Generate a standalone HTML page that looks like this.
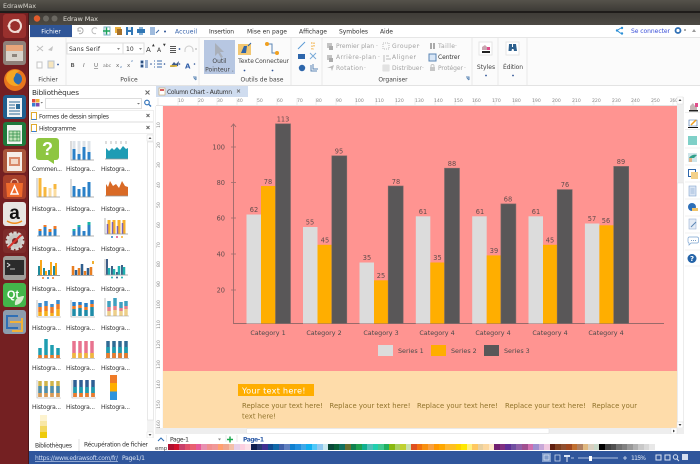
<!DOCTYPE html>
<html><head><meta charset="utf-8"><title>Edraw Max</title>
<style>
html,body{margin:0;padding:0;width:700px;height:464px;overflow:hidden;background:#fff}
svg{position:absolute;left:0;top:0}
text{font-family:"DejaVu Sans","Liberation Sans",sans-serif;font-size:6px;fill:#333}
.l{font-family:"Liberation Sans",sans-serif}
.h{font-size:6px;fill:#333}
.r{font-size:4.6px;fill:#888}
.g{fill:#a2a2a2}
.c{font-size:6.4px;fill:#4a4a4a;text-anchor:middle}
.v{font-size:6.6px;fill:#624c4c;text-anchor:middle}
.t{font-size:6.8px;fill:#90722a}
.pal{position:absolute;left:168px;top:444px;display:flex;height:6px}
.pal i{display:block;width:5.534px;height:6px}
</style></head><body>
<svg width="700" height="464" viewBox="0 0 700 464" xmlns="http://www.w3.org/2000/svg">
<defs>
<linearGradient id="tb" x1="0" y1="0" x2="0" y2="1"><stop offset="0" stop-color="#55524b"/><stop offset="1" stop-color="#3d3b36"/></linearGradient>
<linearGradient id="tb2" x1="0" y1="0" x2="0" y2="1"><stop offset="0" stop-color="#3f3c37"/><stop offset="1" stop-color="#4d4a44"/></linearGradient>
</defs>
<!-- top panels -->
<rect width="700" height="11" fill="url(#tb)"/>
<text x="3" y="8" style="font-size:6.4px;fill:#d8d5ce">EdrawMax</text>
<rect y="11" width="700" height="2" fill="#1f1c1a"/>
<rect y="13" width="700" height="12" fill="url(#tb2)"/>
<!-- launcher -->
<rect y="13" width="29" height="451" fill="#742022"/>
<rect x="28" y="13" width="1" height="451" fill="#4a1517"/>
<!-- launcher icons -->
<rect x="3" y="14" width="23" height="24" rx="3" fill="#99302d"/>
<circle cx="15" cy="26" r="6" fill="none" stroke="#f1dcd6" stroke-width="2"/>
<circle cx="9" cy="26" r="1.5" fill="#f1dcd6"/><circle cx="18" cy="20.5" r="1.5" fill="#f1dcd6"/><circle cx="18" cy="31.5" r="1.5" fill="#f1dcd6"/>
<rect x="3" y="41" width="23" height="24" rx="3" fill="#8f8179"/>
<rect x="6" y="45" width="17" height="16" fill="#d9d4cc"/><rect x="6" y="45" width="17" height="6" fill="#e8a67a"/><rect x="12" y="54" width="5" height="3" fill="#8d857d"/>
<circle cx="15" cy="80" r="11" fill="#e8761d"/><circle cx="16" cy="79" r="6" fill="#2c6cb0"/><path d="M7 74c3-4 8-5 13-3-3 1-5 3-5 5-3 3-1 8 5 9-6 3-13-1-14-7z" fill="#f5a623"/>
<rect x="3" y="95" width="23" height="24" rx="3" fill="#205f8e"/><rect x="7" y="98" width="15" height="19" fill="#f2f4f6"/><path d="M9 102h11M9 105h6M9 108h6M9 111h11M9 114h11" stroke="#2a6a98"/><rect x="16" y="104" width="4" height="5" fill="#2a6a98"/>
<rect x="3" y="122" width="23" height="24" rx="3" fill="#1f7a3c"/><rect x="7" y="125" width="15" height="19" fill="#f3f6f2"/><path d="M9 131h11v10H9zM9 134h11M9 137h11M13 131v10M17 131v10" fill="#bfe3b8" stroke="#2c8a45" stroke-width=".7"/>
<rect x="3" y="149" width="23" height="24" rx="3" fill="#a9563b"/><rect x="7" y="152" width="15" height="19" fill="#f6eee8"/><rect x="9" y="157" width="11" height="9" fill="#d98a6a"/><rect x="11" y="159" width="7" height="5" fill="#f3d9c8"/>
<rect x="3" y="175" width="23" height="24" rx="3" fill="#a8402a"/><path d="M6 183h17l-1 14H7z" fill="#ee6a2c"/><path d="M11 183c0-5 7-5 7 0" fill="none" stroke="#f9c7a5"/><path d="M14.500 186l-3.500 8h7z" fill="none" stroke="#fff" stroke-width="1.500"/>
<rect x="3" y="202" width="23" height="24" rx="3" fill="#e8e6e3"/><text x="14.500" y="219" class="l" style="font-size:19px;font-weight:bold;fill:#111;text-anchor:middle">a</text><path d="M7 221c5 3 10 3 15 0" fill="none" stroke="#f08c1a" stroke-width="1.500"/>
<rect x="3" y="229" width="23" height="24" rx="3" fill="#7d2c2b"/><circle cx="15" cy="241" r="8" fill="#c8c6c2" stroke="#d6d4d0" stroke-width="3" stroke-dasharray="3 1.500"/><circle cx="15" cy="241" r="3" fill="#7d2a28"/><path d="M8 248L21 235" stroke="#d8332c" stroke-width="2"/>
<rect x="3" y="256" width="23" height="24" rx="3" fill="#a09e9a"/><rect x="5" y="260" width="19" height="15" fill="#2b2b2b"/><path d="M7 263l3 2-3 2M10 269h5" stroke="#eee" fill="none" stroke-width=".8"/>
<rect x="3" y="283" width="23" height="24" rx="3" fill="#44b54a"/><text x="13" y="298" class="l" style="font-size:11px;font-weight:bold;fill:#fff;text-anchor:middle">Qt</text><path d="M15 305c-1-6 4-9 9-9-1 5-4 9-9 9z" fill="#d9ecd0"/>
<rect x="3" y="310" width="23" height="24" rx="3" fill="#8c9dae"/><path d="M18 316H7v12h11" fill="none" stroke="#2f6fb5" stroke-width="2"/><path d="M10 322h12v-4M22 322v9H12" fill="none" stroke="#f0b13a" stroke-width="2"/>
<!-- window title -->
<circle cx="37" cy="18.500" r="3.200" fill="#e25c2c"/><circle cx="46" cy="18.500" r="3" fill="#6b6862"/><circle cx="54.500" cy="18.500" r="3" fill="#6b6862"/>
<text x="63" y="21" style="font-size:6.5px;fill:#e2dfd8" textLength="35">Edraw Max</text>
<!-- tab row -->
<rect x="29" y="25" width="671" height="12" fill="#fff"/>
<rect x="30" y="25" width="42" height="12" fill="#2f5597"/>
<text x="51" y="33.500" style="font-size:6px;fill:#fff;text-anchor:middle">Fichier</text>
<!-- qat -->
<path d="M78 28.500a3 3 0 1 1 1 5M78 28v3h3" fill="none" stroke="#aaa"/><path d="M97 28.500a3 3 0 1 0-1 5" fill="none" stroke="#bbb"/>
<rect x="104" y="27" width="6" height="8" fill="#fff" stroke="#7fb0c9"/><path d="M103 31h7M106.500 27.500v7" stroke="#1ba35a" stroke-width="1.500"/>
<rect x="115" y="27" width="6" height="6" fill="#eab140"/><rect x="117" y="29" width="5" height="6" fill="#a5702a"/>
<rect x="126" y="27" width="7" height="8" fill="#3177b5"/><rect x="128" y="27" width="3" height="3" fill="#d8e6f2"/><rect x="128" y="32" width="3" height="3" fill="#fff"/>
<rect x="137" y="29" width="8" height="4" fill="#3177b5"/><rect x="139" y="27" width="4" height="2" fill="#88b2d6"/><rect x="139" y="33" width="4" height="2" fill="#88b2d6"/>
<rect x="150" y="27" width="5" height="8" fill="#9fbbdd"/><path d="M156 33l3-3" stroke="#3b6aa8"/>
<circle cx="165" cy="31.500" r="1" fill="#2f5597"/>
<rect x="168" y="25" width="33" height="12" fill="#fff"/>
<text x="175" y="33.500" style="font-size:6px;fill:#2f5da8" textLength="22">Accueil</text>
<text x="209" y="33.500" class="h" textLength="25">Insertion</text>
<text x="247" y="33.500" class="h" textLength="40">Mise en page</text>
<text x="299" y="33.500" class="h" textLength="28">Affichage</text>
<text x="339" y="33.500" class="h" textLength="29">Symboles</text>
<text x="380" y="33.500" class="h" textLength="13">Aide</text>
<path d="M621 28l-4 2.500 4 3" fill="none" stroke="#2c8fd6"/><circle cx="617" cy="30.500" r="1.200" fill="#2c8fd6"/><circle cx="622" cy="28" r="1.200" fill="#2c8fd6"/><circle cx="622" cy="33.500" r="1.200" fill="#2c8fd6"/>
<text x="631" y="33" style="font-size:6px;fill:#3a4fd8" textLength="39">Se connecter</text>
<circle cx="678" cy="30.500" r="2.500" fill="none" stroke="#2f6fb5" stroke-width="1.800"/>
<path d="M684 30h2" stroke="#555"/><path d="M692 32l2-3 2 3z" fill="#999"/>
<!-- ribbon -->
<rect x="29" y="37" width="671" height="49" fill="#fbfbfb"/>
<rect x="29" y="85" width="671" height="1" fill="#e3e3e3"/>
<path d="M66 38v47M199 38v47M291 38v47M322 38v47M472 38v47M498 38v47M527 38v47" stroke="#e8e8e8"/>
<path d="M29.500 37.500H700" stroke="#e6e6e6"/>
<!-- fichier group -->
<path d="M37 46l6 5M43 46l-6 5" stroke="#c0c0c0" fill="none"/><path d="M48 50l5-4-1 5z" fill="#c4c4c4"/>
<rect x="37" y="62" width="5" height="6" fill="#fff" stroke="#c4c4c4"/><rect x="48" y="61" width="6" height="7" fill="#f6e6bf" stroke="#b9c3d1"/><circle cx="58" cy="64.500" r=".9" fill="#2f5597"/>
<text x="48" y="81.500" style="text-anchor:middle;font-size:6px;fill:#444">Fichier</text>
<!-- police group -->
<rect x="67" y="43" width="56" height="11" fill="#fff" stroke="#ddd"/>
<text x="69" y="51" class="h" textLength="31">Sans Serif</text><path d="M117 48h3l-1.500 2z" fill="#888"/>
<rect x="123" y="43" width="21" height="11" fill="#fff" stroke="#ddd"/>
<text x="126" y="51" class="h">10</text><path d="M139 48h3l-1.500 2z" fill="#888"/>
<text x="146" y="52" class="h" style="font-size:7px">A</text><text x="152" y="46" style="font-size:3.500px">▲</text>
<text x="157" y="52" class="h" style="font-size:6px">A</text><text x="163" y="46" style="font-size:3.500px">▼</text>
<path d="M170 46.500h6M170 48.500h6M170 50.500h6M170 52.500h6" stroke="#555"/><circle cx="179.500" cy="49" r=".9" fill="#2f5597"/>
<path d="M185 52v-2a4 4 0 0 1 8 0v2" fill="none" stroke="#ccc"/><path d="M195 49h2" stroke="#aaa"/>
<g style="font-size:6px">
<text x="70.500" y="67" style="font-weight:bold;font-size:5.500px;fill:#666">B</text>
<text x="83" y="67" style="font-style:italic;font-size:5.500px;fill:#666">I</text>
<text x="94" y="67" style="text-decoration:underline;font-size:5.500px;fill:#666">U</text>
<text x="103" y="67" style="font-size:4.500px;fill:#777">abc</text>
<text x="116" y="67" style="font-size:5.500px;fill:#666">x</text><text x="120" y="68" style="font-size:3px;fill:#36a">2</text>
<text x="127" y="67" style="font-size:5.500px;fill:#666">x</text><text x="131" y="62" style="font-size:3px;fill:#36a">2</text>
</g>
<path d="M141 61h2v2h-2zM141 65h2v2h-2zM145 61h3M145 63h3M145 65h3M145 67h3" stroke="#3b6aa8" stroke-width=".9"/>
<circle cx="151" cy="64" r=".8" fill="#2f5597"/>
<path d="M154 61h1M154 64h1M154 67h1M157 61h5M157 64h5M157 67h5" stroke="#3b6aa8"/><circle cx="164.500" cy="64" r=".8" fill="#2f5597"/>
<path d="M170 67l4-5 2 2 3-3-1 5-4 1z" fill="#3c5a8a"/><path d="M170 66h7" stroke="#f3c22d" stroke-width="1.500"/><circle cx="179.500" cy="64" r=".8" fill="#2f5597"/>
<text x="185" y="68.500" style="font-size:7px;fill:#2f5da8;font-weight:bold">A</text><circle cx="194.500" cy="64" r=".8" fill="#2f5597"/>
<text x="129" y="81.500" style="text-anchor:middle;font-size:6px;fill:#444">Police</text>
<path d="M193 77h3v3M196 80l-2-2" stroke="#5b86b4" fill="none"/>
<!-- outils -->
<rect x="204" y="40" width="31" height="34" fill="#b7c7e2"/>
<path d="M215 43v13l3-3 3 5 2-1-3-5h4z" fill="#a9afb9"/>
<text x="219.500" y="63" style="text-anchor:middle;font-size:6px;fill:#444">Outil</text>
<text x="219.500" y="71.500" style="text-anchor:middle;font-size:6px;fill:#444">Pointeur .</text>
<rect x="238" y="44" width="13" height="11" fill="#f2c772"/><path d="M241 53l3-7h3l-1 7z" fill="#2e63a8"/><path d="M248 46l3-3" stroke="#2e63a8"/>
<text x="246" y="63" style="text-anchor:middle;font-size:6px;fill:#444">Texte</text>
<circle cx="244.500" cy="70.500" r=".9" fill="#2f5597"/>
<path d="M267 44h5v9h5" fill="none" stroke="#5b86b4"/><circle cx="267" cy="44" r="2" fill="#f0a020"/><circle cx="277" cy="53" r="2" fill="#f0a020"/>
<text x="272" y="63" style="text-anchor:middle;font-size:6px;fill:#444" textLength="34">Connecteur</text>
<circle cx="272.500" cy="70.500" r=".9" fill="#2f5597"/>
<text x="262" y="81.500" style="text-anchor:middle;font-size:6px;fill:#444">Outils de base</text>
<path d="M298 49l7-7" stroke="#5b9bd5"/><path d="M311 43h3v3h-2v3h2" fill="none" stroke="#f0a020" stroke-dasharray="1.500 1"/>
<rect x="298" y="54" width="7" height="5" fill="#2e66ab"/><path d="M310 53l6 6M316 53l-6 6" stroke="#7aaad8"/><circle cx="302" cy="68" r="3.200" fill="#2e66ab"/><path d="M311 65v6h6M313 64v5h5" fill="none" stroke="#5b86b4"/>
<!-- organiser -->
<g class="gg">
<rect x="327" y="43" width="5" height="5" fill="#c4c4c4"/><rect x="329" y="46" width="4" height="4" fill="#aaa"/>
<text x="336" y="48" class="g" textLength="38">Premier plan</text><text x="376" y="48" class="g">·</text>
<rect x="327" y="55" width="5" height="5" fill="#c4c4c4"/><rect x="329" y="58" width="4" height="4" fill="#aaa"/>
<text x="336" y="59" class="g" textLength="40">Arrière-plan</text><text x="378" y="59" class="g">·</text>
<path d="M327 68l7-3-2 6-1-3z" fill="#bbb"/>
<text x="336" y="70" class="g" textLength="27">Rotation</text><text x="364" y="70" class="g">·</text>
<path d="M383 43h6v6h-6z" fill="none" stroke="#bbb" stroke-dasharray="1 1"/>
<text x="392" y="48" class="g" textLength="27">Grouper</text><text x="418" y="48" class="g">·</text>
<path d="M384 55v7M386 56h3M386 59h5" stroke="#bbb"/>
<text x="392" y="59" class="g" textLength="24">Aligner</text><text x="414" y="59" class="g">·</text>
<path d="M383 65h6v6h-6zM385 65v6M387 65v6M383 67h6M383 69h6" fill="none" stroke="#c6c6c6" stroke-width=".6"/>
<text x="392" y="70" class="g" textLength="30">Distribuer</text><text x="422" y="70" class="g">·</text>
<path d="M431 43v6M434 43v6" stroke="#aaa" stroke-width="2"/>
<text x="438" y="48" class="g" textLength="17">Taille</text><text x="455" y="48" class="g">·</text>
<rect x="429" y="54" width="7" height="7" fill="#d8e6f6" stroke="#5b86b4"/>
<text x="438" y="59" style="font-size:6px;fill:#333" textLength="22">Centrer</text>
<rect x="430" y="67" width="5" height="4" fill="#c6c6c6"/><path d="M431 67v-1a1.500 1.500 0 0 1 3 0v1" fill="none" stroke="#c6c6c6"/>
<text x="438" y="70" class="g" textLength="25">Protéger</text><text x="464" y="70" class="g">·</text>
</g>
<text x="393" y="81.500" style="text-anchor:middle;font-size:6px;fill:#444">Organiser</text>
<path d="M466 77h3v3M469 80l-2-2" stroke="#5b86b4" fill="none"/>
<!-- styles, edition -->
<rect x="479" y="42" width="13" height="13" fill="#fff" stroke="#e6e6e6"/><rect x="482" y="51" width="8" height="2" fill="#222"/><path d="M482 50v-3l3-2 2 2 2 1v2z" fill="#c9a5b0"/><path d="M487 47h3v3h-3z" fill="#e14d8a"/>
<text x="486" y="69" style="text-anchor:middle;font-size:6px;fill:#444">Styles</text><circle cx="486" cy="75.500" r=".9" fill="#2f5597"/>
<rect x="506" y="42" width="13" height="13" fill="#fff" stroke="#e6e6e6"/><path d="M509 44h3v3h1v-3h3l1 7h-3l-.5-2h-1.500l-.5 2h-3z" fill="#2c5f8d"/>
<text x="513" y="69" style="text-anchor:middle;font-size:6px;fill:#444" textLength="20">Édition</text><circle cx="513" cy="75.500" r=".9" fill="#2f5597"/>
<!-- sidebar -->
<rect x="29" y="86" width="127" height="365" fill="#fff"/>
<text x="32" y="95" style="font-size:7.300px;fill:#333" textLength="47">Bibliothèques</text>
<path d="M145.500 90.500l4 4M149.500 90.500l-4 4" stroke="#666"/>
<rect x="32" y="99" width="3.500" height="3.500" fill="#e24a3b"/><rect x="36" y="99" width="3.500" height="3.500" fill="#f0b033"/><rect x="32" y="103" width="3.500" height="3.500" fill="#3a7fd0"/><rect x="36" y="103" width="3.500" height="3.500" fill="#7f4bb0"/>
<path d="M40.500 102h2.500l-1.250 1.500z" fill="#777"/>
<rect x="45.500" y="98.500" width="96" height="10" fill="#fff" stroke="#ddd"/><path d="M137 103h3l-1.500 1.500z" fill="#777"/>
<circle cx="147" cy="102.500" r="2.300" fill="none" stroke="#2d6fb8" stroke-width="1.100"/><path d="M149 104.500l2 2" stroke="#2d6fb8" stroke-width="1.300"/>
<rect x="30.500" y="110.500" width="123" height="11" fill="#fff" stroke="#eee"/>
<rect x="31.500" y="112.500" width="5" height="7" fill="#fff" stroke="#e0a92e"/><path d="M31.500 119.500h5" stroke="#3a7fd0"/>
<text x="39" y="118.500" style="font-size:6px;fill:#333" textLength="70">Formes de dessin simples</text>
<path d="M146.500 114l3 3M149.500 114l-3 3" stroke="#666"/>
<rect x="30.500" y="122.500" width="123" height="11" fill="#fff" stroke="#eee"/>
<rect x="31.500" y="124.500" width="5" height="7" fill="#fff" stroke="#e0a92e"/><path d="M31.500 131.500h5" stroke="#3a7fd0"/>
<text x="39" y="130.500" style="font-size:6px;fill:#333" textLength="37">Histogramme</text>
<path d="M146.500 126l3 3M149.500 126l-3 3" stroke="#666"/>
<!-- sidebar scrollbar -->
<rect x="147" y="134" width="7" height="304" fill="#f3f3f3"/>
<rect x="147" y="135" width="6" height="6" fill="#fff" stroke="#ddd" stroke-width=".5"/><path d="M148.500 139h3l-1.500-2z" fill="#555"/>
<rect x="147.500" y="142" width="6" height="278" fill="#fff" stroke="#ddd" stroke-width=".6"/>
<rect x="147" y="432" width="6" height="6" fill="#fff" stroke="#ddd" stroke-width=".5"/><path d="M148.500 434h3l-1.500 2z" fill="#555"/>
<!-- thumbs row 1 -->
<rect x="36" y="138" width="23" height="22" rx="3" fill="#8ec641"/><path d="M48 160h6v4z" fill="#8ec641"/>
<text x="47.500" y="155" class="l" style="font-size:18px;font-weight:bold;fill:#fff;text-anchor:middle">?</text>
<g transform="translate(71,141)"><path d="M3 0v19M8 0v19M13 0v19M18 0v19" stroke="#dde3e8" stroke-width="3"/><path d="M3 19V8M8 19V13M13 19V6M18 19V11" stroke="#2a80c8" stroke-width="3"/><path d="M0 0v19h23" fill="none" stroke="#999" stroke-width=".7"/></g>
<g transform="translate(105,141)"><path d="M1 3V0M6 3V0M11 3V0M16 3V0M21 3V0" stroke="#bbb"/><path d="M1 18V7l3 3 3-3 2 2 3-3 3 3 3-4 3 3 2-1v11z" fill="#1f9cb4"/><path d="M0 18h23" stroke="#999" stroke-width=".7"/></g>
<!-- row 2 -->
<g transform="translate(37,178)"><path d="M3 19V0M8 19V9M13 19V13M18 19V6" stroke="#f7b73d" stroke-width="3"/><path d="M13 19V10M18 19V11" stroke="#fbdca0" stroke-width="3"/><path d="M0 0v19h23" fill="none" stroke="#999" stroke-width=".7"/></g>
<g transform="translate(71,179)"><path d="M3 18V7M8 18V10M13 18V8M18 18V3" stroke="#2a80c8" stroke-width="3"/><path d="M0 0v18h23" fill="none" stroke="#999" stroke-width=".7"/></g>
<g transform="translate(105,178)"><path d="M1 18V6l2 3 2-6 3 5 3-2 3 4 3-7 3 5 3 1v9z" fill="#d96a26"/><path d="M0 18h23" stroke="#999" stroke-width=".7"/></g>
<!-- row 3 -->
<g transform="translate(37,220)"><path d="M3 16v-5M8 16V7M13 16v-4M18 16V9" stroke="#2a80c8" stroke-width="3"/><path d="M3 11V9M8 7V5M13 12v-3M18 9V6" stroke="#ef7b28" stroke-width="3"/><path d="M0 16h23" stroke="#999" stroke-width=".7"/></g>
<g transform="translate(71,220)"><path d="M3 16v-5M8 16V7M13 16v-5M18 16V5" stroke="#2a80c8" stroke-width="3"/><path d="M3 11V9M8 7V5M18 5V2" stroke="#1cb5a5" stroke-width="3"/><path d="M0 16h23" stroke="#999" stroke-width=".7"/></g>
<g transform="translate(105,218)"><path d="M4 16V2M9 16V2M14 16V2M19 16V2" stroke="#f7b02c" stroke-width="3"/><path d="M2.500 16V6M7.500 16V4M12.500 16V8M17.500 16V5" stroke="#7c64b8" stroke-width="1.500"/><path d="M0 0v16h23" fill="none" stroke="#999" stroke-width=".7"/><circle cx="7" cy="19" r="1" fill="#2a80c8"/><circle cx="12" cy="19" r="1" fill="#e14d8a"/><circle cx="17" cy="19" r="1" fill="#f7b02c"/></g>
<!-- row 4 -->
<g transform="translate(37,259)"><path d="M2 16V7M7 16V9M12 16V11M17 16V7" stroke="#1f8a9c" stroke-width="2"/><path d="M4 16V1M9 16V12M14 16V3M19 16V4" stroke="#f9a619" stroke-width="2"/><path d="M0 16.500h23" stroke="#999"/><circle cx="6" cy="19" r="1" fill="#ef7b28"/><circle cx="11" cy="19" r="1" fill="#2a80c8"/><circle cx="16" cy="19" r="1" fill="#ef7b28"/></g>
<g transform="translate(71,261)"><path d="M2 14V5M8 14V7M14 14V10M20 14V6" stroke="#e87f23" stroke-width="2.500"/><path d="M5 14V9M11 14V3M17 14V7" stroke="#2f5f8f" stroke-width="2.500"/><path d="M0 14.500h23" stroke="#999" stroke-width=".7"/><rect x="21" y="0" width="2" height="3" fill="#f0b030"/></g>
<g transform="translate(105,259)"><path d="M2 16V0M7 16V7M12 16V13M17 16V6" stroke="#3f5f88" stroke-width="2"/><path d="M4 16V9M9 16V10M14 16V7M19 16V8" stroke="#1fb0b0" stroke-width="2.500"/><path d="M0 0v16h23" fill="none" stroke="#999" stroke-width=".7"/><circle cx="7" cy="18.500" r="1" fill="#1fb0b0"/><circle cx="12" cy="18.500" r="1" fill="#3f5f88"/><circle cx="17" cy="18.500" r="1" fill="#1fb0b0"/></g>
<!-- row 5 -->
<g transform="translate(37,299)"><path d="M3 17V13M9 17V12M15 17V14M21 17V10" stroke="#f5b01e" stroke-width="3.500"/><path d="M3 13V8M9 12V7M15 14V8M21 10V5" stroke="#ef7b28" stroke-width="3.500"/><path d="M3 8V4M9 7V2M15 8V5M21 5V1" stroke="#2a80c8" stroke-width="3.500" opacity=".9"/><path d="M0 1v17h24" fill="none" stroke="#999" stroke-width=".6"/></g>
<g transform="translate(71,299)"><path d="M3 17V10M9 17V9M15 17V11M21 17V8" stroke="#1f8ca8" stroke-width="3.500"/><path d="M3 10V7M9 9V6M15 11V8M21 8V5" stroke="#ef7b28" stroke-width="3.500"/><path d="M3 7V3M9 6V3M15 8V4M21 5V1" stroke="#2a80c8" stroke-width="3.500"/><path d="M0 1v17h24" fill="none" stroke="#999" stroke-width=".6"/></g>
<g transform="translate(105,297)"><path d="M4 19V14M10 19V13M16 19V14M21 19V12" stroke="#edcf8a" stroke-width="3.500"/><path d="M4 14V10M10 13V9M16 14V11M21 12V9" stroke="#e5808a" stroke-width="3.500"/><path d="M4 10V4M10 9V1M16 11V5M21 9V4" stroke="#3fa0c0" stroke-width="3.500"/><path d="M0 1v18h24" fill="none" stroke="#999" stroke-width=".6"/></g>
<!-- row 6 -->
<g transform="translate(37,338)"><path d="M3 20V10M9 20V1M15 20V7M21 20V10" stroke="#1f9db0" stroke-width="3.500"/><path d="M3 20V17M9 20V17M15 20V17M21 20V17" stroke="#ef7b28" stroke-width="3.500"/><path d="M0 20.500h24" stroke="#999" stroke-width=".6"/></g>
<g transform="translate(71,338)"><path d="M3 20V3M9 20V3M15 20V3M21 20V3" stroke="#e8738f" stroke-width="3.500"/><path d="M3 20V15M9 20V15M15 20V15M21 20V15" stroke="#efb83d" stroke-width="3.500"/><path d="M0 20.500h24" stroke="#999" stroke-width=".6"/></g>
<g transform="translate(105,338)"><path d="M3 20V3M9 20V3M15 20V3M21 20V3" stroke="#2f6a94" stroke-width="3.500"/><path d="M3 20V9M9 20V9M15 20V9M21 20V9" stroke="#1f9db0" stroke-width="3.500"/><path d="M3 20V15M9 20V15M15 20V15M21 20V15" stroke="#ef7b28" stroke-width="3.500"/><path d="M0 20.500h24" stroke="#999" stroke-width=".6"/></g>
<!-- row 7 -->
<g transform="translate(37,379)"><path d="M3 18V2M9 18V2M15 18V2M21 18V2" stroke="#d0b44a" stroke-width="3.500"/><path d="M3 14V7M9 14V7M15 14V7M21 14V7" stroke="#4f8fb0" stroke-width="3.500"/><path d="M3 18V14M9 18V14M15 18V14M21 18V14" stroke="#d99a5a" stroke-width="3.500"/><path d="M0 1v18h24" fill="none" stroke="#aaa" stroke-width=".6"/></g>
<g transform="translate(71,379)"><path d="M4 18V1M10 18V1M16 18V1M22 18V1" stroke="#2f5f94" stroke-width="3.500"/><path d="M4 14V8M10 14V8M16 14V8M22 14V8" stroke="#1f9db0" stroke-width="3.500"/><path d="M4 18V14M10 18V14M16 18V14M22 18V14" stroke="#ef7b28" stroke-width="3.500"/><path d="M1 1v18h24" fill="none" stroke="#aaa" stroke-width=".6"/></g>
<rect x="110" y="375" width="7" height="8" fill="#ef7b28"/><rect x="110" y="383" width="7" height="8.500" fill="#ffae00"/><rect x="110" y="391.500" width="7" height="8.500" fill="#2f94dc"/>
<!-- row 8 -->
<rect x="40" y="415" width="7" height="6" fill="#fdf3cf"/><rect x="40" y="421" width="7" height="5" fill="#f8e7a6"/><rect x="40" y="426" width="7" height="6" fill="#f3d860"/><rect x="40" y="432" width="7" height="6" fill="#eecb0a"/>
<!-- thumb labels -->
<g style="font-size:6px">
<text x="32" y="171" textLength="30">Commen...</text><text x="66" y="171" textLength="29">Histogra...</text><text x="101" y="171" textLength="29">Histogra...</text>
<text x="32" y="211" textLength="29">Histogra...</text><text x="66" y="211" textLength="29">Histogra...</text><text x="101" y="211" textLength="29">Histogra...</text>
<text x="32" y="251" textLength="29">Histogra...</text><text x="66" y="251" textLength="29">Histogra...</text><text x="101" y="251" textLength="29">Histogra...</text>
<text x="32" y="291" textLength="29">Histogra...</text><text x="66" y="291" textLength="29">Histogra...</text><text x="101" y="291" textLength="29">Histogra...</text>
<text x="32" y="330" textLength="29">Histogra...</text><text x="66" y="330" textLength="29">Histogra...</text><text x="101" y="330" textLength="29">Histogra...</text>
<text x="32" y="370" textLength="29">Histogra...</text><text x="66" y="370" textLength="29">Histogra...</text><text x="101" y="370" textLength="29">Histogra...</text>
<text x="32" y="409" textLength="29">Histogra...</text><text x="66" y="409" textLength="29">Histogra...</text><text x="101" y="409" textLength="29">Histogra...</text>
</g>
<!-- sidebar bottom tabs -->
<rect x="29" y="438" width="127" height="13" fill="#fff"/>
<path d="M79 439v12" stroke="#e2e2e2"/>
<text x="35" y="447.500" style="font-size:6px;fill:#333" textLength="37">Bibliothèques</text>
<text x="84" y="446.500" style="font-size:6px;fill:#333" textLength="64">Récupération de fichier</text>
<!-- doc tabs -->
<rect x="155" y="86" width="545" height="11" fill="#fff"/>
<rect x="156" y="86" width="92" height="11" fill="#cfdcef"/>
<rect x="159" y="88" width="6" height="7" fill="#fff" stroke="#c9a46a" stroke-width=".6"/><rect x="160" y="89" width="4" height="2" fill="#d86060"/>
<text x="167" y="94" style="font-size:6px;fill:#333" textLength="65">Column Chart - Autumn</text>
<path d="M237 89.500l3 3M240 89.500l-3 3" stroke="#555" stroke-width=".7"/>
<!-- ruler -->
<rect x="156" y="97" width="521" height="9" fill="#fff"/>
<rect x="156" y="105" width="521" height="1" fill="#e3e3e3"/>
<path d="M158 105v-7M178 105v-7M198 105v-7M217 105v-7M237 105v-7M257 105v-7M277 105v-7M297 105v-7M316 105v-7M336 105v-7M356 105v-7M376 105v-7M396 105v-7M415 105v-7M435 105v-7M455 105v-7M475 105v-7M495 105v-7M514 105v-7M534 105v-7M554 105v-7M574 105v-7M594 105v-7M613 105v-7M633 105v-7M653 105v-7M673 105v-7" stroke="#e0e0e0" stroke-width=".6"/>
<g>
<text class="r" x="178" y="102">10</text><text class="r" x="198" y="102">20</text><text class="r" x="217" y="102">30</text><text class="r" x="237" y="102">40</text><text class="r" x="257" y="102">50</text><text class="r" x="277" y="102">60</text><text class="r" x="297" y="102">70</text><text class="r" x="316" y="102">80</text><text class="r" x="336" y="102">90</text><text class="r" x="355" y="102">100</text><text class="r" x="375" y="102">110</text><text class="r" x="395" y="102">120</text><text class="r" x="415" y="102">130</text><text class="r" x="434" y="102">140</text><text class="r" x="454" y="102">150</text><text class="r" x="472" y="102">160</text><text class="r" x="492" y="102">170</text><text class="r" x="512" y="102">180</text><text class="r" x="532" y="102">190</text><text class="r" x="552" y="102">200</text><text class="r" x="572" y="102">210</text><text class="r" x="592" y="102">220</text><text class="r" x="612" y="102">230</text><text class="r" x="631" y="102">240</text><text class="r" x="651" y="102">250</text><text class="r" x="670" y="102" style="font-size:4px">260</text>
</g>
<rect x="155" y="106" width="8" height="328" fill="#fff"/>
<path d="M155.500 106v328M163 106v328" stroke="#e8e8e8" stroke-width=".6"/>
<g transform="translate(160,0)" class="r">
<text class="r" transform="translate(0,128) rotate(-90)">10</text><text class="r" transform="translate(0,148) rotate(-90)">20</text><text class="r" transform="translate(0,168) rotate(-90)">30</text><text class="r" transform="translate(0,188) rotate(-90)">40</text><text class="r" transform="translate(0,208) rotate(-90)">50</text><text class="r" transform="translate(0,228) rotate(-90)">60</text><text class="r" transform="translate(0,248) rotate(-90)">70</text><text class="r" transform="translate(0,267) rotate(-90)">80</text><text class="r" transform="translate(0,287) rotate(-90)">90</text><text class="r" transform="translate(0,309) rotate(-90)">100</text><text class="r" transform="translate(0,329) rotate(-90)">110</text><text class="r" transform="translate(0,349) rotate(-90)">120</text><text class="r" transform="translate(0,369) rotate(-90)">130</text><text class="r" transform="translate(0,389) rotate(-90)">140</text><text class="r" transform="translate(0,409) rotate(-90)">150</text><text class="r" transform="translate(0,429) rotate(-90)">160</text>
</g>
<!-- canvas -->
<rect x="163" y="106" width="514" height="265" fill="#ff9491"/>
<rect x="163" y="371" width="514" height="57" fill="#fedcaa"/>
<!-- axes -->
<path d="M233.500 124V323.500H664M231 127l2.500-3 2.500 3" fill="none" stroke="#9a6a6a" stroke-width=".9"/>
<path d="M231 147h5M231 182.500h5M231 218h5M231 254h5M231 290h5" stroke="#9a6a6a" stroke-width=".8"/>
<text x="225" y="149.500" style="font-size:6.600px;fill:#624c4c;text-anchor:end">100</text>
<text x="225" y="185" style="font-size:6.600px;fill:#624c4c;text-anchor:end">80</text>
<text x="225" y="220.500" style="font-size:6.600px;fill:#624c4c;text-anchor:end">60</text>
<text x="225" y="256.500" style="font-size:6.600px;fill:#624c4c;text-anchor:end">40</text>
<text x="225" y="292.500" style="font-size:6.600px;fill:#624c4c;text-anchor:end">20</text>
<!-- bars -->
<g fill="#dcdcdc">
<rect x="246.500" y="214.500" width="14.500" height="109"/><rect x="303" y="227" width="14.500" height="96.500"/><rect x="359.500" y="262.500" width="14.500" height="61"/><rect x="415.800" y="216.300" width="14.500" height="107.200"/><rect x="472.200" y="216.300" width="14.500" height="107.200"/><rect x="528.500" y="216.300" width="14.500" height="107.200"/><rect x="584.900" y="223.500" width="14.500" height="100"/>
</g>
<g fill="#ffae00">
<rect x="261" y="186" width="14.500" height="137.500"/><rect x="317.500" y="244.800" width="14.500" height="78.700"/><rect x="374" y="280.300" width="14.500" height="43.200"/><rect x="430.300" y="262.500" width="14.500" height="61"/><rect x="486.700" y="255.400" width="14.500" height="68.100"/><rect x="543" y="244.800" width="14.500" height="78.700"/><rect x="599.400" y="225.300" width="14.500" height="98.200"/>
</g>
<g fill="#595758" stroke="#7d6a6a" stroke-width=".6">
<rect x="275.500" y="123.800" width="15" height="199.700"/><rect x="331.800" y="155.800" width="15" height="167.700"/><rect x="388.200" y="186" width="15" height="137.500"/><rect x="444.500" y="168.200" width="15" height="155.300"/><rect x="500.900" y="203.900" width="15" height="119.600"/><rect x="557.200" y="189.600" width="15" height="133.900"/><rect x="613.700" y="166.400" width="15" height="157.100"/>
</g>
<!-- values -->
<text class="v" x="254" y="212">62</text><text class="v" x="268" y="184">78</text><text class="v" x="283" y="121.500">113</text>
<text class="v" x="310" y="224.500">55</text><text class="v" x="325" y="242.500">45</text><text class="v" x="339" y="153.500">95</text>
<text class="v" x="367" y="260">35</text><text class="v" x="381" y="278">25</text><text class="v" x="396" y="184">78</text>
<text class="v" x="423" y="214">61</text><text class="v" x="437.500" y="260">35</text><text class="v" x="452" y="166">88</text>
<text class="v" x="480" y="214">61</text><text class="v" x="494" y="253">39</text><text class="v" x="508" y="201.500">68</text>
<text class="v" x="536" y="214">61</text><text class="v" x="550" y="242.500">45</text><text class="v" x="565" y="187">76</text>
<text class="v" x="592" y="221">57</text><text class="v" x="606" y="223">56</text><text class="v" x="621" y="164">89</text>
<!-- categories -->
<text class="c" x="268" y="335">Category 1</text><text class="c" x="324" y="335">Category 2</text><text class="c" x="381" y="335">Category 3</text><text class="c" x="437" y="335">Category 4</text><text class="c" x="493" y="335">Category 4</text><text class="c" x="550" y="335">Category 4</text><text class="c" x="606" y="335">Category 4</text>
<!-- legend -->
<rect x="378" y="345" width="15" height="11" fill="#dcdcdc"/><text x="398" y="353" style="font-size:6.400px;fill:#4a4a4a">Series 1</text>
<rect x="431" y="345" width="15" height="11" fill="#ffae00"/><text x="451" y="353" style="font-size:6.400px;fill:#4a4a4a">Series 2</text>
<rect x="484" y="345" width="15" height="11" fill="#595758"/><text x="504" y="353" style="font-size:6.400px;fill:#4a4a4a">Series 3</text>
<!-- text block -->
<rect x="238" y="384" width="76" height="12" fill="#ffae00"/>
<text x="242" y="393.500" style="font-size:8.200px;fill:#fff" textLength="63.500">Your text here!</text>
<text class="t" x="242" y="408" textLength="81">Replace your text here!</text>
<text class="t" x="329.500" y="408" textLength="81">Replace your text here!</text>
<text class="t" x="417" y="408" textLength="81">Replace your text here!</text>
<text class="t" x="505" y="408" textLength="81">Replace your text here!</text>
<text class="t" x="592" y="408" textLength="45">Replace your</text>
<text class="t" x="242" y="418.500" textLength="34">text here!</text>
<!-- v scrollbar -->
<rect x="677" y="97" width="7" height="337" fill="#eeeeee"/>
<rect x="677" y="97" width="6" height="7" fill="#fff" stroke="#ddd" stroke-width=".5"/><path d="M678.500 101h3l-1.500-2z" fill="#444"/>
<rect x="677.500" y="183" width="6" height="239" fill="#fff" stroke="#e0e0e0" stroke-width=".5"/>
<rect x="677" y="422" width="6" height="6" fill="#fff" stroke="#ddd" stroke-width=".5"/><path d="M678.500 424h3l-1.500 2z" fill="#444"/>
<!-- h scrollbar -->
<rect x="156" y="428" width="528" height="6" fill="#eeeeee"/>
<rect x="246.500" y="428.500" width="302.500" height="5" rx="1" fill="#fff" stroke="#ddd" stroke-width=".5"/>
<rect x="671" y="428" width="6" height="6" fill="#fff" stroke="#ddd" stroke-width=".5"/><path d="M673 429.500v3l2-1.500z" fill="#444"/>
<!-- right panel -->
<rect x="684" y="97" width="16" height="354" fill="#fff"/>
<path d="M685 112.500h15M685 129.500h15M685 148h15M685 165h15M685 182h15M685 199h15M685 216h15M685 233h15M685 250h15M685 266h15" stroke="#ececec" stroke-width=".8"/>
<rect x="689" y="110" width="9" height="1.500" fill="#222"/><path d="M690 110v-4l3-3 2 3 2 1v3z" fill="#c4b5b5"/><rect x="695" y="103" width="3" height="4" fill="#e14d8a"/>
<path d="M689 120h8v6h-8z" fill="#fff" stroke="#3b6aa8" stroke-width=".6"/><path d="M691 125l5-5" stroke="#f0a020" stroke-width="1.500"/><rect x="688" y="127" width="10" height="1" fill="#111"/>
<rect x="688" y="136" width="9" height="9" fill="#7fd0c8"/>
<rect x="688" y="153" width="9" height="9" fill="#cfe5ea"/><path d="M689 158c2-3 5-4 8-3l-3 3z" fill="#2f9f8a"/><rect x="689" y="158" width="3" height="4" fill="#e0b48a"/>
<rect x="688.500" y="169.500" width="7" height="7" fill="#fff" stroke="#2e66ab"/><rect x="691" y="172" width="7" height="7" fill="#f3d089"/>
<rect x="689" y="186" width="7" height="10" fill="#dae5f4" stroke="#84a5cf" stroke-width=".6"/><path d="M690.500 189h4M690.500 191h4M690.500 193h4" stroke="#6a8fc0" stroke-width=".6"/>
<circle cx="692" cy="207" r="4" fill="#2d6fb8"/><rect x="692" y="208" width="6" height="3" fill="#f0c46a"/>
<rect x="689" y="219" width="7" height="10" fill="#e4ebf5" stroke="#9ab3d6" stroke-width=".6"/><path d="M691 227l5-5" stroke="#5b86b4"/>
<path d="M689 237h8a1.500 1.500 0 0 1 1.500 1.500v3a1.500 1.500 0 0 1-1.500 1.500h-6l-2 2v-2a1.500 1.500 0 0 1-1-1.500v-3a1.500 1.500 0 0 1 1-1.500z" fill="#fff" stroke="#7aa3d0" stroke-width=".7"/>
<path d="M691 240.500h.8M693 240.500h.8M695 240.500h.8" stroke="#5b86b4"/>
<circle cx="692" cy="258.500" r="4.500" fill="#2363a8"/><text x="692" y="261" style="font-size:7px;font-weight:bold;fill:#fff;text-anchor:middle">?</text>
<!-- page tabs -->
<rect x="156" y="434" width="544" height="10" fill="#fff"/>
<path d="M158 441l3-3 3 3" fill="none" stroke="#2f6fb5"/>
<path d="M166.500 435v7M226 435v7M237 435v7" stroke="#ddd" stroke-width=".6"/>
<text x="170" y="441.500" style="font-size:6px;fill:#333" textLength="19">Page-1</text>
<path d="M218 438.500h3l-1.500 2z" fill="#888"/>
<path d="M227 439.500h6M230 436.500v6" stroke="#1faa50" stroke-width="1.500"/>
<text x="243" y="441.500" style="font-size:6px;fill:#2f5da8;font-weight:bold" textLength="21">Page-1</text>
<rect x="156" y="444" width="544" height="7" fill="#fff"/>
<text x="155" y="450" style="font-size:5.500px;fill:#444">emp</text>
<!-- status bar -->
<rect x="29" y="451" width="671" height="13" fill="#30569c"/>
<text x="35" y="460" style="font-size:6px;fill:#cfdcf3;text-decoration:underline" textLength="83">https://www.edrawsoft.com/fr/</text>
<text x="122" y="460" style="font-size:6px;fill:#e4ebf6" textLength="23">Page1/1</text>
<rect x="542" y="453" width="9" height="9" fill="#7f9bca"/><rect x="544" y="455" width="5" height="5" fill="none" stroke="#dbe4f4" stroke-width=".7"/>
<rect x="555" y="455" width="5" height="6" fill="none" stroke="#c8d5ec" stroke-width=".8"/><rect x="564" y="455" width="6" height="2" fill="#dbe4f4"/><path d="M567 457v5" stroke="#dbe4f4"/>
<path d="M571 458h3M578 458h40M623 458h4M625 456v4" stroke="#dbe4f4" stroke-width=".8"/>
<rect x="589" y="456" width="3" height="5" fill="#fff"/>
<text x="631" y="460" style="font-size:6px;fill:#e4ebf6" textLength="15">115%</text>
<rect x="656" y="455" width="5" height="5" fill="none" stroke="#dbe4f4"/><rect x="665" y="455" width="5" height="5" fill="none" stroke="#dbe4f4"/><circle cx="675.500" cy="457" r="2.200" fill="none" stroke="#dbe4f4"/><path d="M677 459l2 2" stroke="#dbe4f4"/><rect x="682" y="454" width="6" height="6" fill="#d5def0"/>
</svg>
<div class="pal"><i style="background:#b01030"></i><i style="background:#d0102c"></i><i style="background:#c8406a"></i><i style="background:#e0506a"></i><i style="background:#e86070"></i><i style="background:#e65a9a"></i><i style="background:#e890b0"></i><i style="background:#f09090"></i><i style="background:#f09898"></i><i style="background:#ffa070"></i><i style="background:#f0a890"></i><i style="background:#f4c0a8"></i><i style="background:#e8d0e8"></i><i style="background:#fcd0e0"></i><i style="background:#fde0e8"></i><i style="background:#102050"></i><i style="background:#283870"></i><i style="background:#403090"></i><i style="background:#104a90"></i><i style="background:#1068a8"></i><i style="background:#4060a8"></i><i style="background:#6080c0"></i><i style="background:#1080d0"></i><i style="background:#2090e0"></i><i style="background:#40a8e8"></i><i style="background:#10b0f0"></i><i style="background:#50c8f8"></i><i style="background:#90c8f0"></i><i style="background:#c8e8f0"></i><i style="background:#084838"></i><i style="background:#086038"></i><i style="background:#107060"></i><i style="background:#687030"></i><i style="background:#108050"></i><i style="background:#20a050"></i><i style="background:#10b090"></i><i style="background:#50c0b8"></i><i style="background:#20d0b0"></i><i style="background:#40c890"></i><i style="background:#20b060"></i><i style="background:#88b810"></i><i style="background:#a8d060"></i><i style="background:#c0d030"></i><i style="background:#c8e0b0"></i><i style="background:#e05020"></i><i style="background:#f07010"></i><i style="background:#f89010"></i><i style="background:#f8a040"></i><i style="background:#ff9800"></i><i style="background:#ffa800"></i><i style="background:#ffb830"></i><i style="background:#ffc020"></i><i style="background:#ffd000"></i><i style="background:#ffe800"></i><i style="background:#fff080"></i><i style="background:#ffc860"></i><i style="background:#e8d0a0"></i><i style="background:#fcd8a0"></i><i style="background:#fde8c8"></i><i style="background:#702070"></i><i style="background:#803080"></i><i style="background:#603098"></i><i style="background:#7050a0"></i><i style="background:#9060a8"></i><i style="background:#a05090"></i><i style="background:#d070b0"></i><i style="background:#a090d0"></i><i style="background:#c8a8d8"></i><i style="background:#f0c8e0"></i><i style="background:#602010"></i><i style="background:#804020"></i><i style="background:#905030"></i><i style="background:#a04820"></i><i style="background:#c07030"></i><i style="background:#b08060"></i><i style="background:#e0b880"></i><i style="background:#d8d0c0"></i><i style="background:#c8d8c8"></i><i style="background:#000"></i><i style="background:#404040"></i><i style="background:#505050"></i><i style="background:#707070"></i><i style="background:#808080"></i><i style="background:#989898"></i><i style="background:#b0b0b0"></i><i style="background:#c8c8c8"></i><i style="background:#d8d8d8"></i><i style="background:#e8e8e8"></i></div>
</body></html>
